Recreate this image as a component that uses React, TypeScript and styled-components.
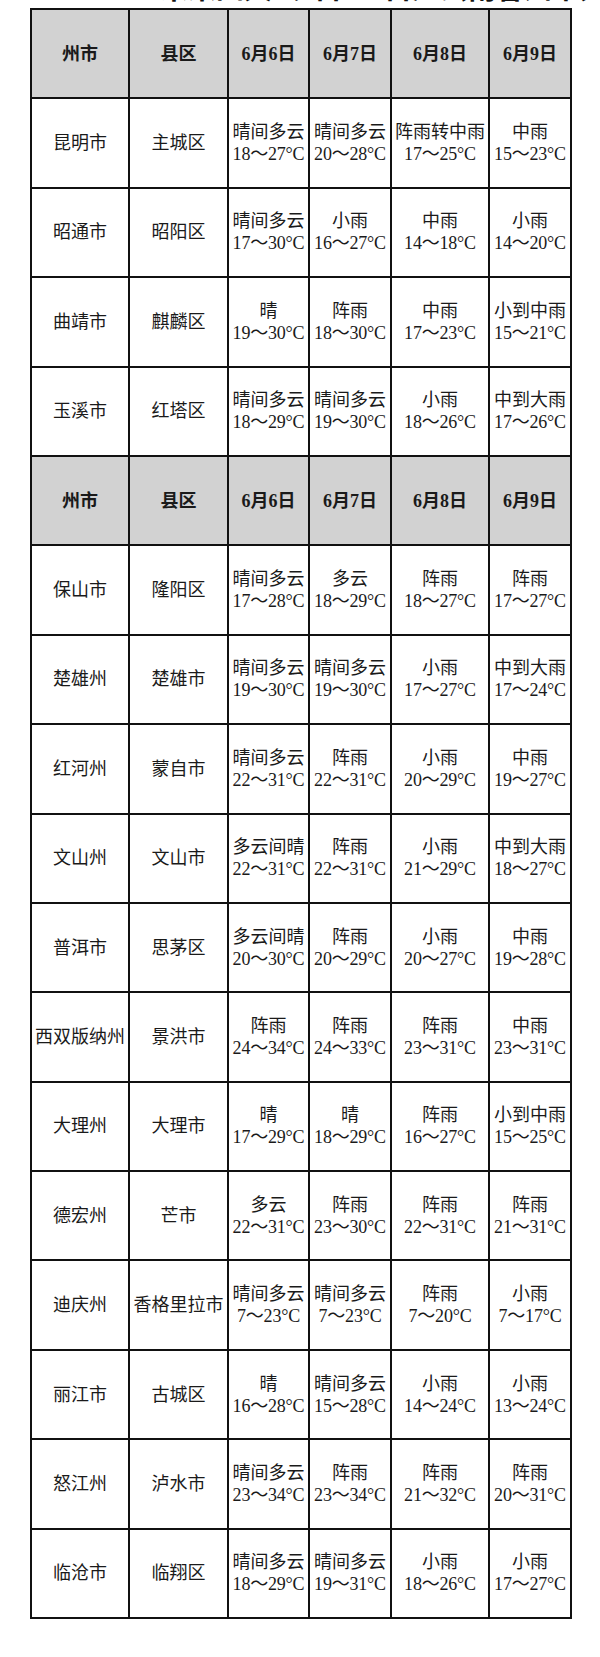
import React from 'react';
import styled, { createGlobalStyle } from 'styled-components';

interface Forecast {
  sky: string;
  low: number;
  high: number;
}

interface CityRow {
  city: string;
  county: string;
  days: Forecast[];
}

const GlobalStyle = createGlobalStyle`
  html, body {
    margin: 0;
    padding: 0;
    background: #ffffff;
  }
  body {
    font-family: "Liberation Serif", "Noto Sans CJK SC", serif;
    color: #1a1a1a;
  }
`;

const Page = styled.div`
  width: 600px;
  height: 1657px;
  overflow: hidden;
  background: #ffffff;
`;

// only the lower edge of the title peeks in above the table
const Title = styled.h1`
  margin: -24.5px 0 0 0;
  padding-left: 160px;
  height: 28px;
  font-size: 28px;
  line-height: 28px;
  font-weight: 700;
  white-space: nowrap;
  overflow: hidden;
  color: #111;
`;

const Table = styled.div`
  margin: 4.5px 0 0 30px;
  width: 542px;
  display: grid;
  grid-template-columns: 96px 97px 79px 80px 96px 80px;
  grid-auto-rows: 87.4px;
  gap: 2px;
  padding: 2px;
  box-sizing: border-box;
  background: #111;
`;

const Cell = styled.div<{ $head?: boolean }>`
  background: ${(p) => (p.$head ? '#d2d2d2' : '#ffffff')};
  display: flex;
  flex-direction: column;
  align-items: center;
  justify-content: center;
  font-size: 18px;
  line-height: 22px;
  font-weight: ${(p) => (p.$head ? 700 : 400)};
  white-space: nowrap;
  color: #1a1a1a;
`;

const Sky = styled.span`
  display: block;
`;

const Temp = styled.span`
  display: block;
  letter-spacing: -0.2px;
`;

const f = (sky: string, low: number, high: number): Forecast => ({ sky, low, high });

const groupA: CityRow[] = [
  { city: '昆明市', county: '主城区', days: [f('晴间多云', 18, 27), f('晴间多云', 20, 28), f('阵雨转中雨', 17, 25), f('中雨', 15, 23)] },
  { city: '昭通市', county: '昭阳区', days: [f('晴间多云', 17, 30), f('小雨', 16, 27), f('中雨', 14, 18), f('小雨', 14, 20)] },
  { city: '曲靖市', county: '麒麟区', days: [f('晴', 19, 30), f('阵雨', 18, 30), f('中雨', 17, 23), f('小到中雨', 15, 21)] },
  { city: '玉溪市', county: '红塔区', days: [f('晴间多云', 18, 29), f('晴间多云', 19, 30), f('小雨', 18, 26), f('中到大雨', 17, 26)] },
];

const groupB: CityRow[] = [
  { city: '保山市', county: '隆阳区', days: [f('晴间多云', 17, 28), f('多云', 18, 29), f('阵雨', 18, 27), f('阵雨', 17, 27)] },
  { city: '楚雄州', county: '楚雄市', days: [f('晴间多云', 19, 30), f('晴间多云', 19, 30), f('小雨', 17, 27), f('中到大雨', 17, 24)] },
  { city: '红河州', county: '蒙自市', days: [f('晴间多云', 22, 31), f('阵雨', 22, 31), f('小雨', 20, 29), f('中雨', 19, 27)] },
  { city: '文山州', county: '文山市', days: [f('多云间晴', 22, 31), f('阵雨', 22, 31), f('小雨', 21, 29), f('中到大雨', 18, 27)] },
  { city: '普洱市', county: '思茅区', days: [f('多云间晴', 20, 30), f('阵雨', 20, 29), f('小雨', 20, 27), f('中雨', 19, 28)] },
  { city: '西双版纳州', county: '景洪市', days: [f('阵雨', 24, 34), f('阵雨', 24, 33), f('阵雨', 23, 31), f('中雨', 23, 31)] },
  { city: '大理州', county: '大理市', days: [f('晴', 17, 29), f('晴', 18, 29), f('阵雨', 16, 27), f('小到中雨', 15, 25)] },
  { city: '德宏州', county: '芒市', days: [f('多云', 22, 31), f('阵雨', 23, 30), f('阵雨', 22, 31), f('阵雨', 21, 31)] },
  { city: '迪庆州', county: '香格里拉市', days: [f('晴间多云', 7, 23), f('晴间多云', 7, 23), f('阵雨', 7, 20), f('小雨', 7, 17)] },
  { city: '丽江市', county: '古城区', days: [f('晴', 16, 28), f('晴间多云', 15, 28), f('小雨', 14, 24), f('小雨', 13, 24)] },
  { city: '怒江州', county: '泸水市', days: [f('晴间多云', 23, 34), f('阵雨', 23, 34), f('阵雨', 21, 32), f('阵雨', 20, 31)] },
  { city: '临沧市', county: '临翔区', days: [f('晴间多云', 18, 29), f('晴间多云', 19, 31), f('小雨', 18, 26), f('小雨', 17, 27)] },
];

const headers = ['州市', '县区', '6月6日', '6月7日', '6月8日', '6月9日'];

const HeaderRow: React.FC<{ group: string }> = ({ group }) => (
  <>
    {headers.map((h) => (
      <Cell $head key={`${group}-${h}`}>
        {h}
      </Cell>
    ))}
  </>
);

const Rows: React.FC<{ rows: CityRow[] }> = ({ rows }) => (
  <>
    {rows.map((r) => (
      <React.Fragment key={r.city}>
        <Cell>{r.city}</Cell>
        <Cell>{r.county}</Cell>
        {r.days.map((d, i) => (
          <Cell key={i}>
            <Sky>{d.sky}</Sky>
            <Temp>
              {d.low}～{d.high}°C
            </Temp>
          </Cell>
        ))}
      </React.Fragment>
    ))}
  </>
);

export default function App() {
  return (
    <Page>
      <GlobalStyle />
      <Title>未来四天（6日—9日）云南各州市天气预报</Title>
      <Table>
        <HeaderRow group="a" />
        <Rows rows={groupA} />
        <HeaderRow group="b" />
        <Rows rows={groupB} />
      </Table>
    </Page>
  );
}
